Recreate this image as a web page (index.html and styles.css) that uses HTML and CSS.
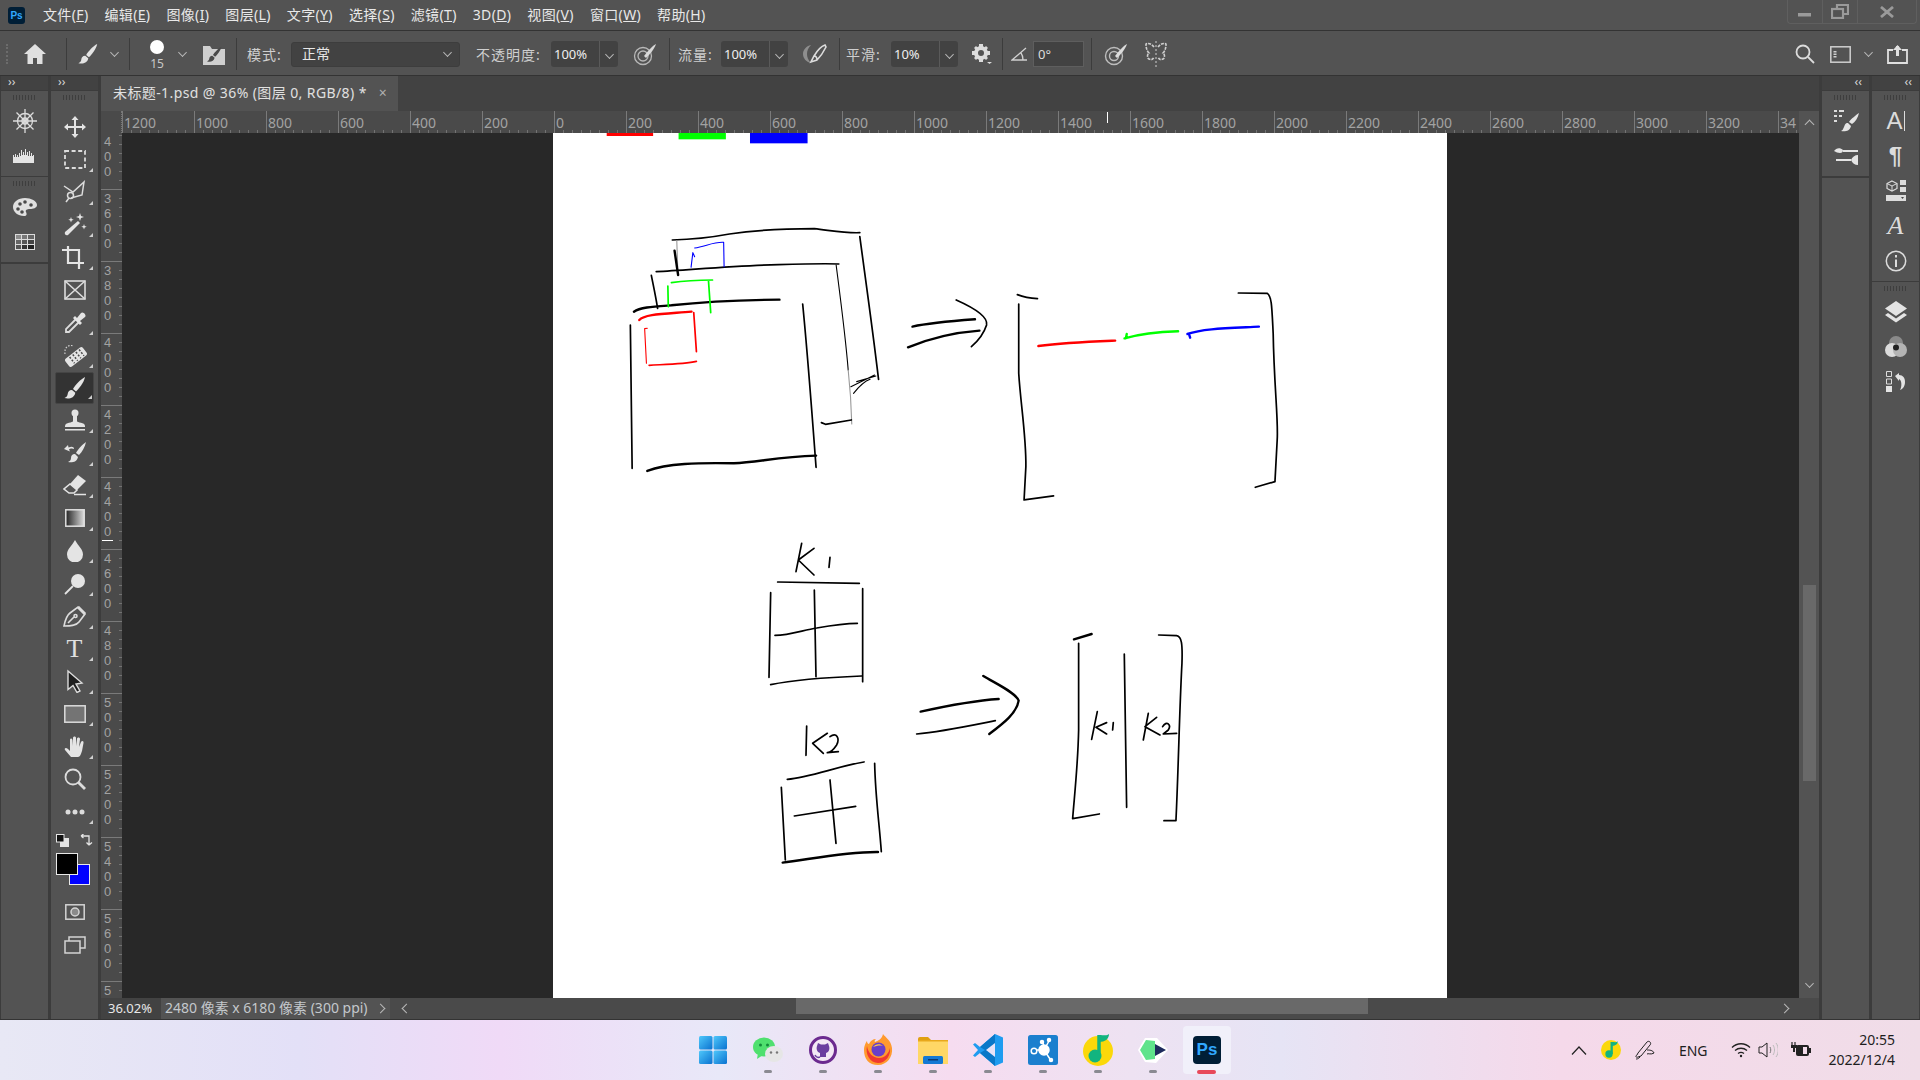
FILE: index.html
```html
<!DOCTYPE html>
<html>
  <head>
    <title>未标题-1.psd</title>
    <link rel="stylesheet" href="styles.css">
  </head>
  <body>
    <svg class="defs" width="0" height="0">
      <symbol id="brush" viewBox="0 0 24 24">
        <path d="M22 1c-4 2-10 8-12 12l3 2.500c3-3 8-9 9-14.500z"/>
        <path d="M9 14c-3 0-4 2-4.300 4-.2 2-1.200 3-3.200 4 4.500 1.300 10 0 10.800-5.300z"/>
      </symbol>
      <linearGradient id="gradfill"><stop offset="0" stop-color="#222"/><stop offset="1" stop-color="#ddd"/></linearGradient>
      <linearGradient id="winblue" x1="0" y1="0" x2="1" y2="1"><stop offset="0" stop-color="#4fc8fb"/><stop offset="1" stop-color="#0a72d0"/></linearGradient>
    </svg>

    <header class="menubar">
      <div class="ps-logo">Ps</div>
      <nav class="menu">
        <span>文件(<u>F</u>)</span>
        <span>编辑(<u>E</u>)</span>
        <span>图像(<u>I</u>)</span>
        <span>图层(<u>L</u>)</span>
        <span>文字(<u>Y</u>)</span>
        <span>选择(<u>S</u>)</span>
        <span>滤镜(<u>T</u>)</span>
        <span>3D(<u>D</u>)</span>
        <span>视图(<u>V</u>)</span>
        <span>窗口(<u>W</u>)</span>
        <span>帮助(<u>H</u>)</span>
      </nav>
      <div class="win-controls">
        <div class="win-btn win-min"><svg width="14" height="14" viewBox="0 0 14 14"><rect x="0" y="8" width="13" height="3.500" fill="#9a9a9a"/></svg></div>
        <div class="win-btn win-max"><svg width="18" height="15" viewBox="0 0 18 15" fill="none" stroke="#9a9a9a" stroke-width="2.200"><rect x="1" y="5" width="11" height="9"/><path d="M6 4V1h11v9h-4"/></svg></div>
        <div class="win-btn win-close"><svg width="14" height="12" viewBox="0 0 14 12" stroke="#9a9a9a" stroke-width="2.800"><path d="M1 1l12 10M13 1L1 11"/></svg></div>
      </div>
    </header>

    <section class="optbar">
      <div class="opt-grip"></div>
      <div class="opt-home"><svg width="22" height="20" viewBox="0 0 22 20" fill="#e0e0e0"><path d="M11 0L0 10h3.500v10H9v-6h4v6h5.500V10H22z"/></svg></div>
      <div class="opt-sep"></div>
      <svg class="opt-brush ico" width="22" height="22"><use href="#brush"/></svg>
      <div class="chev opt-chev-1"></div>
      <div class="opt-sep opt-sep-2"></div>
      <div class="brush-tip"><div class="tip-dot"></div><div class="tip-size">15</div></div>
      <div class="chev opt-chev-2"></div>
      <div class="brush-panel"><svg width="22" height="22" viewBox="0 0 22 22"><path d="M0 3h7l2 3h13v16H0z" fill="#cfcfcf"/><path transform="translate(3 3) scale(.7)" d="M22 1c-4 2-10 8-12 12l3 2.500c3-3 8-9 9-14.500zM9 14c-3 0-4 2-4.300 4-.2 2-1.200 3-3.200 4 4.500 1.300 10 0 10.800-5.300z" fill="#4a4a4a"/></svg></div>
      <div class="opt-sep opt-sep-3"></div>
      <label class="opt-label lbl-mode">模式:</label>
      <div class="select">正常<div class="chev"></div></div>
      <label class="opt-label lbl-opacity">不透明度:</label>
      <div class="numbox"><span>100%</span><div class="numbox-arrow"><div class="chev"></div></div></div>
      <svg class="opt-icon icon-airbrush" width="24" height="24" viewBox="0 0 24 24" fill="none" stroke="#b8b8b8" stroke-width="1.300"><circle cx="10" cy="14" r="8.500"/><circle cx="10" cy="14" r="5"/><path d="M23 2c-3 1-9 8-12 12l2 2c3-3 8-8 10-14z" fill="#d8d8d8" stroke="none"/></svg>
      <div class="opt-sep opt-sep-4"></div>
      <label class="opt-label lbl-flow">流量:</label>
      <div class="numbox"><span>100%</span><div class="numbox-arrow"><div class="chev"></div></div></div>
      <svg class="opt-icon icon-flow" width="24" height="20" viewBox="0 0 24 20"><path d="M8 1C3 2 0 6 0 10s3 8 8 9C5 16 4 13 4 10s1-6 4-9z" fill="#8e8e8e"/><path d="M22 1c-3 1-8 6-11 11l-3 6 6-2c3-3 7-9 9-13zM11 12c2 0 3 1 3 4" fill="none" stroke="#dcdcdc" stroke-width="1.600"/></svg>
      <div class="opt-sep opt-sep-5"></div>
      <label class="opt-label lbl-smooth">平滑:</label>
      <div class="numbox"><span>10%</span><div class="numbox-arrow"><div class="chev"></div></div></div>
      <svg class="opt-icon icon-gear" width="20" height="20" viewBox="0 0 20 20"><circle cx="9" cy="9" r="5" fill="none" stroke="#dcdcdc" stroke-width="4"/><path d="M7 0h4v3H7zM7 15h4v3H7zM0 7h3v4H0zM15 7h3v4h-3zM2 4l2-2 2 2-2 2zM12 4l2-2 2 2-2 2zM2 14l2-2 2 2-2 2zM12 14l2-2 2 2-2 2z" fill="#dcdcdc"/><path d="M15 18h5l-2.500 2z" fill="#dcdcdc"/></svg>
      <div class="opt-sep opt-sep-6"></div>
      <svg class="opt-icon icon-angle" width="16" height="14" viewBox="0 0 16 14" fill="none" stroke="#d0d0d0" stroke-width="1.300"><path d="M15 1L1 13h15M10 6c1.500 2 2 4 2 7"/></svg>
      <div class="anglebox">0°</div>
      <div class="opt-sep opt-sep-7"></div>
      <svg class="opt-icon icon-target" width="24" height="24" viewBox="0 0 24 24" fill="none" stroke="#bdbdbd" stroke-width="1.400"><circle cx="10" cy="14" r="8.500"/><circle cx="10" cy="14" r="4.500"/><path d="M23 2c-3 1-9 8-12 12l2 2c3-3 8-8 10-14z" fill="#dcdcdc" stroke="none"/></svg>
      <svg class="opt-icon icon-butterfly" width="22" height="26" viewBox="0 0 22 26" fill="none" stroke="#cfcfcf" stroke-width="1.600"><path d="M11 0v26" stroke-dasharray="2 2" stroke-width="1"/><path d="M9 6C6 2 2 2 1 3c0 4 1 7 3 9-2 1-2 5 0 6s4 1 5-2M13 6c3-4 7-4 8-3 0 4-1 7-3 9 2 1 2 5 0 6s-4 1-5-2" stroke-dasharray="3 1"/></svg>
      <div class="opt-right">
        <svg width="20" height="20" viewBox="0 0 20 20" fill="none" stroke="#dcdcdc" stroke-width="1.800"><circle cx="8" cy="8" r="6.500"/><path d="M13 13l6 6"/></svg>
        <svg class="icon-workspace" width="21" height="17" viewBox="0 0 21 17" fill="none" stroke="#cfcfcf" stroke-width="1.500"><rect x=".8" y=".8" width="19.400" height="15.400"/><path d="M5 5v7" stroke-width="3" stroke-dasharray="1.500 1"/></svg>
        <div class="chev icon-wschev"></div>
        <svg class="icon-share" width="21" height="20" viewBox="0 0 21 20" fill="none" stroke="#e0e0e0" stroke-width="1.800"><path d="M6 6H1v13h19V6h-5"/><path d="M10.500 12V2" stroke-width="3"/><path d="M6 6l4.500-5L15 6z" fill="#e0e0e0" stroke="none"/></svg>
      </div>
    </section>

    <main class="workspace">
      <aside class="dock dock-left">
        <div class="dock-col">
          <div class="dock-head">››</div>
          <div class="panel panel-2">
            <div class="grip"></div>
            <svg width="24" height="24" viewBox="0 0 24 24" fill="none" stroke="#dcdcdc" stroke-width="1.300"><circle cx="12" cy="12" r="7.500"/><circle cx="12" cy="12" r="3"/><path d="M12 0v24M0 12h24M3.500 3.500l17 17M20.500 3.500l-17 17"/></svg>
            <svg width="24" height="14" viewBox="0 0 24 14" fill="#e4e4e4"><path d="M0 14V6h1v2h1V5h1v3h1V6h1v2h1V4h1v3h1V1h1v5h1V3h1v3h1V0h1v6h1V3h1v4h1V2h1v5h1V4h1v3h1V6h1v8z"/></svg>
          </div>
          <div class="panel panel-2">
            <div class="grip"></div>
            <svg width="24" height="18" viewBox="0 0 24 18"><path d="M12 0C5 0 0 4 0 9s5 9 11 9c3 0 3-2 2-4s1-3 4-3 7-1 7-4c0-4-6-7-12-7z" fill="#e0e0e0"/><circle cx="7" cy="6" r="1.800" fill="#4a4a4a"/><circle cx="12" cy="4" r="1.800" fill="#4a4a4a"/><circle cx="5" cy="11" r="1.800" fill="#4a4a4a"/><circle cx="9" cy="14" r="1.800" fill="#4a4a4a"/><circle cx="18" cy="7" r="1.800" fill="#4a4a4a"/></svg>
            <svg width="20" height="16" viewBox="0 0 20 16"><rect width="20" height="16" fill="#dcdcdc"/><rect x="1" y="1" width="5" height="4" fill="#8c8c8c"/><rect x="7" y="1" width="5" height="4" fill="#777"/><rect x="13" y="1" width="6" height="4" fill="#666"/><rect x="1" y="6" width="5" height="4" fill="#666"/><rect x="7" y="6" width="5" height="4" fill="#555"/><rect x="13" y="6" width="6" height="4" fill="#444"/><rect x="1" y="11" width="5" height="4" fill="#555"/><rect x="7" y="11" width="5" height="4" fill="#333"/><rect x="13" y="11" width="6" height="4" fill="#222"/></svg>
          </div>
          <div class="panel-rest"></div>
        </div>
        <div class="dock-col">
          <div class="dock-head">››</div>
          <div class="toolbar">
            <div class="grip"></div>
            <div class="tool"><svg class="ico" width="24" height="24" viewBox="0 0 24 24"><path d="M12 1l3.500 4H13v6h6V8.500l4 3.500-4 3.500V13h-6v6h2.500L12 23l-3.500-4H11v-6H5v2.500L1 12l4-3.500V11h6V5H8.500z"/></svg></div>
            <div class="tool more"><svg width="22" height="20" viewBox="0 0 22 20" fill="none" stroke="#dcdcdc" stroke-width="1.800" stroke-dasharray="4 2.600"><rect x="1" y="1" width="20" height="17"/></svg></div>
            <div class="tool more"><svg width="24" height="24" viewBox="0 0 24 24" fill="none" stroke="#dcdcdc" stroke-width="1.500"><path d="M1 6l9 6 11-10-2 13-11 3"/><circle cx="7.500" cy="15.500" r="3"/><path d="M6 18l-3 4"/></svg></div>
            <div class="tool more"><svg width="24" height="24" viewBox="0 0 24 24" fill="#e4e4e4"><path d="M15 8l2 2L5 22c-2 1-4-1-3-3z"/><path d="M17 0l1 3 3 1-3 1-1 3-1-3-3-1 3-1zM8 4l.7 2 2 .7-2 .7L8 9.500l-.7-2-2-.7 2-.7zM21 11l.7 2 2 .7-2 .7-.7 2-.7-2-2-.7 2-.7z"/></svg></div>
            <div class="tool more"><svg width="26" height="24" viewBox="0 0 26 24" fill="none" stroke="#e4e4e4" stroke-width="2.200"><path d="M6 0v17h16M0 4h17v19"/></svg></div>
            <div class="tool"><svg width="24" height="22" viewBox="0 0 24 22" fill="none" stroke="#dcdcdc" stroke-width="1.600"><rect x="2" y="2" width="20" height="18"/><path d="M2 2l20 18M22 2L2 20"/></svg></div>
            <div class="tool more"><svg width="24" height="24" viewBox="0 0 24 24"><path d="M13 8L3 18v3h3L16 11" fill="none" stroke="#dcdcdc" stroke-width="1.800"/><path d="M12 5l2 2 4-5c2-2 6 2 4 4l-5 4 2 2-2 2-7-7z" fill="#e4e4e4"/></svg></div>
            <div class="tool more"><svg width="24" height="24" viewBox="0 0 24 24"><g transform="rotate(-38 13 14)"><rect x="2" y="9" width="22" height="10" rx="2" fill="#e4e4e4"/><path d="M8 10v8M12 10v8M16 10v8M20 10v8" stroke="#4a4a4a" stroke-width="1.500" stroke-dasharray="2 1.500"/></g><path d="M2 11C1 5 5 1 11 3" fill="none" stroke="#cfcfcf" stroke-width="1.200" stroke-dasharray="1.500 1.500"/></svg></div>
            <div class="tool more active"><svg class="ico" width="24" height="24"><use href="#brush"/></svg></div>
            <div class="tool more"><svg width="22" height="24" viewBox="0 0 22 24" fill="#e4e4e4"><circle cx="11" cy="4" r="3.500"/><path d="M9 7h4v5c0 2 8 1 8 5v1H1v-1c0-4 8-3 8-5z"/><path d="M1 20h20v1.500H1z"/></svg></div>
            <div class="tool more"><svg class="ico" width="24" height="24" viewBox="0 0 24 24"><path d="M23 1c-3 2-8 7-10 11l3 2c3-3 6-8 7-13zM12 13c-3 0-4 2-4 4s-1 3-3 4c4 1 9 0 10-5zM1 8l4-4 .5 2.500C9 5 11 6 11 8 9 7 7 7.500 6 8.500l1 2z"/></svg></div>
            <div class="tool more"><svg width="24" height="24" viewBox="0 0 24 24"><path d="M15 1l8 6-9 9-7-6z" fill="#e4e4e4"/><path d="M7 10l7 6-3 3H6l-5-4z" fill="none" stroke="#e4e4e4" stroke-width="1.500"/><path d="M11 20.500h12" stroke="#e4e4e4" stroke-width="1.500"/></svg></div>
            <div class="tool more"><svg width="20" height="18" viewBox="0 0 20 18"><rect x=".8" y=".8" width="18.400" height="16.400" fill="url(#gradfill)" stroke="#e0e0e0" stroke-width="1.500"/></svg></div>
            <div class="tool more"><svg class="ico" width="16" height="22" viewBox="0 0 16 22"><path d="M8 0c3 6 8 9 8 14.500a8 8 0 0 1-16 0C0 9 5 6 8 0z"/></svg></div>
            <div class="tool more"><svg width="24" height="24" viewBox="0 0 24 24"><circle cx="15" cy="9" r="7" fill="#e4e4e4"/><path d="M10 14l-8 8" stroke="#e4e4e4" stroke-width="1.800"/></svg></div>
            <div class="tool more"><svg width="24" height="24" viewBox="0 0 24 24" fill="none" stroke="#dcdcdc" stroke-width="1.600"><path d="M1 22c1-5 2-10 6-13L15 3l7 7-6 8c-3 4-9 4-15 4zM5 19l6-6"/><circle cx="12.500" cy="12" r="1.500"/><path d="M15 3l7 7" stroke-width="3"/></svg></div>
            <div class="tool more"><span class="type-glyph">T</span></div>
            <div class="tool more"><svg width="20" height="24" viewBox="0 0 20 24"><path d="M3 2l14 12-6 1 4 7-3 1.500-4-7-5 4z" fill="#1e1e1e" stroke="#dcdcdc" stroke-width="1.400"/></svg></div>
            <div class="tool more"><svg width="22" height="18" viewBox="0 0 22 18"><rect x=".8" y=".8" width="20.400" height="16.400" fill="#747474" stroke="#dcdcdc" stroke-width="1.500"/></svg></div>
            <div class="tool more"><svg class="ico" width="22" height="22" viewBox="0 0 22 22"><path d="M7 21c-2-2-4-5-6-7-1-2 1-3 3-1l2 2V4c0-2 2-2 2.500 0l.5 6V2c0-2 3-2 3 0v8l1-7c0-2 3-2 3 0l-1 8 2-5c1-2 3-1 2.500 1L18 15c-1 3-2 6-4 6z"/></svg></div>
            <div class="tool"><svg width="22" height="22" viewBox="0 0 22 22" fill="none" stroke="#dcdcdc"><circle cx="9" cy="9" r="7.500" stroke-width="1.800"/><path d="M14.500 14.500l6.500 6.500" stroke-width="2.800"/></svg></div>
            <div class="tool more"><svg width="20" height="6" viewBox="0 0 20 6" fill="#dcdcdc"><circle cx="3" cy="3" r="2.500"/><circle cx="10" cy="3" r="2.500"/><circle cx="17" cy="3" r="2.500"/></svg></div>
            <div class="tool-swatch-top">
              <svg width="13" height="13" viewBox="0 0 13 13"><rect x="4" y="4" width="9" height="9" fill="#e4e4e4"/><rect x=".5" y=".5" width="7.500" height="7.500" fill="#111" stroke="#e4e4e4"/></svg>
              <svg width="13" height="13" viewBox="0 0 13 13" fill="none" stroke="#e4e4e4" stroke-width="1.300"><path d="M1 2h8v9M1 2l2.500-2M1 2l2.500 2M9 11L6.500 8.500M9 11l3-2.500"/></svg>
            </div>
            <div class="swatches"><div class="swatch-bg"></div><div class="swatch-fg"></div></div>
            <div class="tool tool-qm"><svg width="20" height="16" viewBox="0 0 20 16" fill="none" stroke="#d4d4d4" stroke-width="1.500"><rect x=".8" y=".8" width="18.400" height="14.400"/><circle cx="10" cy="8" r="4" fill="#8a8a8a"/></svg></div>
            <div class="tool"><svg width="22" height="18" viewBox="0 0 22 18" fill="none" stroke="#d4d4d4" stroke-width="1.500"><rect x="1" y="5" width="15" height="12"/><path d="M5 5V1h16v11h-5"/></svg></div>
          </div>
        </div>
      </aside>

      <section class="doc">
        <div class="tabbar">
          <div class="tab">未标题-1.psd @ 36% (图层 0, RGB/8) * <span class="tab-close">×</span></div>
        </div>
        <div class="ruler-row">
          <div class="ruler-corner"></div>
          <div class="hruler">
            <span>1200</span><span>1000</span><span>800</span><span>600</span><span>400</span><span>200</span><span>0</span><span>200</span><span>400</span><span>600</span><span>800</span><span>1000</span><span>1200</span><span>1400</span><span>1600</span><span>1800</span><span>2000</span><span>2200</span><span>2400</span><span>2600</span><span>2800</span><span>3000</span><span>3200</span><span>34</span>
            <i class="ruler-mark-h"></i>
          </div>
          <div class="scroll-cap"><div class="chev chev-up"></div></div>
        </div>
        <div class="doc-body">
          <div class="vruler">
            <div>4<br>0<br>0</div><div>3<br>6<br>0<br>0</div><div>3<br>8<br>0<br>0</div><div>4<br>0<br>0<br>0</div><div>4<br>2<br>0<br>0</div><div>4<br>4<br>0<br>0</div><div>4<br>6<br>0<br>0</div><div>4<br>8<br>0<br>0</div><div>5<br>0<br>0<br>0</div><div>5<br>2<br>0<br>0</div><div>5<br>4<br>0<br>0</div><div>5<br>6<br>0<br>0</div><div>5</div>
            <i class="ruler-mark-v"></i>
          </div>
          <div class="canvas">
            <div class="paper">
              <svg class="sketch" viewBox="553 133 894 865" width="894" height="865">
                <g transform="translate(600 120) scale(.4464 .3333)">
                  <rect x="15" y="39" width="104" height="9" fill="#ff0000"/>
                  <rect x="176" y="39" width="106" height="19" fill="#00ff00"/>
                  <rect x="336" y="39" width="129" height="31" fill="#0000ff"/>
                  <g class="ink">
                    <path d="M162 360C220 358 250 352 290 342C350 330 430 326 480 326C520 332 550 340 582 338"/>
                    <path d="M582 350C595 480 610 620 624 778"/>
                    <path class="thin gray" d="M172 362L174 440"/>
                    <path class="thick" d="M167 392L175 465"/>
                    <path d="M126 455C200 450 300 437 400 434C450 432 500 430 535 432"/>
                    <path class="thin" d="M529 435C540 550 550 650 556 750"/>
                    <path class="thin gray" d="M556 750C560 800 563 860 564 912"/>
                    <path d="M115 466C120 500 125 530 129 565"/>
                    <path class="thin" d="M562 800L615 765M575 785L618 768M568 820C580 800 590 785 605 778"/>
                    <path d="M496 908L505 913L563 900"/>
                    <path class="thick" d="M76 575C90 562 120 560 160 556C230 546 320 540 402 539"/>
                    <path d="M454 552C465 700 475 880 484 1042"/>
                    <path d="M68 615L72 1045"/>
                    <path class="thick" d="M106 1053C150 1030 220 1028 300 1030C350 1028 400 1010 484 1007"/>
                    <path class="thick" d="M700 620C740 608 790 603 840 598"/>
                    <path class="thick" d="M690 682C730 660 790 638 850 632"/>
                    <path d="M798 540C840 565 870 590 866 615C860 640 845 665 832 680"/>
                    <path d="M935 524C950 532 965 535 980 536"/>
                    <path d="M938 552L938 760C942 850 955 950 954 1040L950 1140L1016 1128"/>
                    <path d="M1430 519L1495 520C1505 530 1505 560 1508 640C1510 800 1520 900 1517 960L1512 1085L1468 1102"/>
                  </g>
                  <g class="ink red">
                    <path class="thick" d="M88 600C100 582 140 582 205 575"/>
                    <path d="M210 578L216 695M110 736C150 733 190 732 216 724"/>
                    <path class="thin" d="M106 625L100 626L104 730"/>
                    <path class="thick" d="M982 678C1040 668 1100 665 1154 662"/>
                  </g>
                  <g class="ink green">
                    <path d="M160 488C190 482 220 480 252 480M152 498L153 560M243 482L248 578"/>
                    <path class="thick" d="M1175 655C1210 642 1250 636 1295 634M1180 642L1178 655"/>
                  </g>
                  <g class="ink blue">
                    <path class="thin" d="M204 442L208 398L212 410M212 384C235 380 255 365 277 367L278 440"/>
                    <path class="thick" d="M1316 642C1350 626 1400 625 1476 620M1320 645L1322 653"/>
                  </g>
                </g>
                <g class="ink" transform="translate(740 530) scale(.3333)">
                  <path d="M185 40L168 125M222 55L175 90L222 135M270 82L267 112"/>
                  <path d="M113 156L358 160M92 188L87 442M368 176L368 455M223 180L228 440"/>
                  <path d="M105 316C150 316 190 300 230 294C280 285 320 280 352 280"/>
                  <path d="M92 464C150 452 260 442 365 438"/>
                  <path d="M200 588L198 676M262 610L218 640L250 670"/>
                  <path d="M270 620C290 605 300 625 290 645C280 660 270 668 262 668L295 665"/>
                  <path d="M142 748C210 742 290 710 372 696M124 772L136 990"/>
                  <path d="M404 700C406 800 418 880 424 965M163 858L347 829M270 750L288 940"/>
                  <path class="thick" d="M128 998C200 990 310 965 414 966"/>
                  <path class="thick" d="M542 545C610 530 700 512 776 507"/>
                  <path d="M530 612C600 606 700 585 766 572"/>
                  <path class="thick" d="M730 438C770 462 830 490 836 512C830 550 790 580 748 612"/>
                  <path class="thick" d="M1002 328L1055 312"/>
                  <path d="M1016 340L1016 600C1014 700 1005 780 998 866L1078 852"/>
                  <path d="M1256 315L1310 317C1325 320 1328 340 1326 400C1318 550 1316 700 1308 872L1272 872"/>
                  <path d="M1153 372L1160 832"/>
                  <path d="M1072 545L1055 628M1100 578L1068 592L1100 612M1120 578L1118 600"/>
                  <path d="M1225 550L1210 630M1250 562L1215 590L1260 615"/>
                  <path d="M1268 590C1280 570 1295 585 1285 600L1270 612L1310 610"/>
                </g>
              </svg>
            </div>
          </div>
          <div class="vscroll">
            <div class="vscroll-thumb"></div>
            <div class="chev vscroll-down"></div>
          </div>
        </div>
        <footer class="statusbar">
          <div class="zoom-val">36.02%</div>
          <div class="doc-info">2480 像素 x 6180 像素 (300 ppi)</div>
          <div class="info-arrow"><div class="chev chev-right"></div></div>
          <div class="hscroll">
            <div class="chev chev-left"></div>
            <div class="hscroll-thumb"></div>
            <div class="chev chev-right"></div>
          </div>
        </footer>
      </section>

      <aside class="dock dock-right">
        <div class="dock-col">
          <div class="dock-head dock-head-r">‹‹</div>
          <div class="panel panel-2">
            <div class="grip"></div>
            <svg width="28" height="24" viewBox="0 0 28 24"><path d="M2 1h3v2H2zM2 6h3v2H2zM2 11h3v2H2zM7 1h5v2H7zM7 6h3v2H7z" fill="#dcdcdc"/><path d="M27 4c-3 2-8 6-10 9l3 2c3-2 6-6 7-11zM16 14c-3 0-3 2-4 4s-1 3-3 4c4 1 9 0 10-5z" fill="#e4e4e4"/></svg>
            <svg width="26" height="20" viewBox="0 0 26 20" fill="#e4e4e4"><path d="M10 4h15v2H10zM1 5c2-3 6-4 9-1 0 2-1 3-3 3-2 0-4-1-6-2zM3 13h15v2H3zM18 14c1-3 4-5 7-5v10c-3 0-6-2-7-5z"/></svg>
          </div>
          <div class="panel-rest"></div>
        </div>
        <div class="dock-col">
          <div class="dock-head dock-head-r">‹‹</div>
          <div class="panel panel-b1">
            <div class="grip"></div>
            <div class="panel-glyph glyph-a">A<i></i></div>
            <div class="panel-glyph glyph-p">¶</div>
            <svg width="20" height="22" viewBox="0 0 20 22"><path d="M6 1l5 2.500v5L6 11 1 8.500v-5z" fill="none" stroke="#dcdcdc" stroke-width="1.200"/><path d="M1 3.500l5 2.500 5-2.500M6 6v5" fill="none" stroke="#dcdcdc"/><path d="M14 0h6v5h-6zM14 7h6v5h-6zM0 15h20v6H0z" fill="#dcdcdc"/><path d="M15 17h3l-1.500 2z" fill="#444"/></svg>
            <div class="panel-glyph glyph-script">A</div>
            <svg width="22" height="22" viewBox="0 0 22 22" fill="none" stroke="#dcdcdc" stroke-width="1.500"><circle cx="11" cy="11" r="9.700"/><path d="M11 9.500V17" stroke-width="2"/><path d="M11 5v2.500" stroke-width="2"/></svg>
          </div>
          <div class="panel panel-b2">
            <div class="grip"></div>
            <svg width="22" height="22" viewBox="0 0 22 22" fill="#e4e4e4"><path d="M11 0l11 7.500L11 15 0 7.500z"/><path d="M3 12l8 5.500 8-5.500 3 2-11 7.500L0 14z"/></svg>
            <svg width="22" height="21" viewBox="0 0 22 21"><circle cx="11" cy="7" r="7" fill="#8a8a8a"/><circle cx="7" cy="14" r="7" fill="#dcdcdc"/><circle cx="15" cy="14" r="7" fill="#b4b4b4"/><circle cx="11" cy="11.500" r="3" fill="#222"/></svg>
            <svg width="20" height="21" viewBox="0 0 20 21"><path d="M.5.500h5v5h-5zM.5 8h5v5h-5z" fill="none" stroke="#dcdcdc"/><path d="M0 15h6v6H0z" fill="#e4e4e4"/><path d="M9 5l4-3v2c4 0 6 3 6 7 0 4-2 7-5 8 2-3 2-10-1-11v2z" fill="#e4e4e4"/></svg>
          </div>
        </div>
      </aside>
    </main>

    <footer class="taskbar">
      <div class="task-icons">
        <div class="task"><svg width="28" height="28" viewBox="0 0 28 28" fill="url(#winblue)"><rect width="13.500" height="13.500" rx="1.500"/><rect x="14.500" width="13.500" height="13.500" rx="1.500"/><rect y="14.500" width="13.500" height="13.500" rx="1.500"/><rect x="14.500" y="14.500" width="13.500" height="13.500" rx="1.500"/></svg></div>
        <div class="task on"><svg width="30" height="28" viewBox="0 0 30 28"><ellipse cx="11" cy="11" rx="11" ry="9.500" fill="#4fe06e"/><path d="M5 17l-1 6 6-4z" fill="#4fe06e"/><circle cx="7.500" cy="9" r="1.500" fill="#138a3a"/><circle cx="14.500" cy="9" r="1.500" fill="#138a3a"/><ellipse cx="21" cy="18" rx="9" ry="8" fill="#e6e6e6"/><circle cx="18" cy="16.500" r="1.200" fill="#777"/><circle cx="24" cy="16.500" r="1.200" fill="#777"/></svg></div>
        <div class="task on"><svg width="28" height="28" viewBox="0 0 28 28"><circle cx="14" cy="14" r="12.500" fill="#f3e8f5" stroke="#6b2a8f" stroke-width="3"/><path d="M8 10l1-3 3 1.500h4L19 7l1 3c1 3 0 6-3 7v4h-6v-4c-3-1-4-4-3-7z" fill="#6b3fa0"/><path d="M11 21c-2 1-4 0-5-2" stroke="#6b3fa0" stroke-width="1.500" fill="none"/></svg></div>
        <div class="task on"><svg width="30" height="32" viewBox="0 0 30 32"><path d="M20 0c2 3 8 6 9 14 1 9-5 17-14 17S1 25 1 16c0-4 2-8 3-9 0 2 1 3 2 3 1-3 4-5 7-5-1 1-2 2-1 3 3-1 7-3 8-8z" fill="#ff9a2e"/><path d="M4 12c-2 8 3 17 11 17s13-8 12-15c-1 5-5 10-11 10S5 19 4 12z" fill="#f0392f"/><circle cx="15.500" cy="15.500" r="7" fill="#6a3fc8"/><path d="M10 13c2-3 7-4 10-1-3-1-7 0-10 1z" fill="#ffc94a"/></svg></div>
        <div class="task on"><svg width="30" height="28" viewBox="0 0 30 28"><path d="M0 3a2 2 0 0 1 2-2h8l3 3h-13z" fill="#e0a010"/><path d="M0 4h30v24H0z" fill="#ffd766"/><path d="M0 4h30v1.500H0z" fill="#e8a81c"/><rect x="5" y="20" width="20" height="8" rx="1.500" fill="#1479d4"/><rect x="10" y="23" width="10" height="1.500" fill="#0b3a72"/></svg></div>
        <div class="task on"><svg width="30" height="32" viewBox="0 0 30 32"><path d="M22 0l8 3.500v25L22 32 7 19l-5 4-2-1.500L5 16 0 10.500 2 9l5 4z" fill="#1f9cf0"/><path d="M22 0v32L7 19l5-3-5-3z" fill="#0a78c8"/><path d="M22 9v14l-9-7z" fill="#e8e4f8"/></svg></div>
        <div class="task on"><svg width="30" height="30" viewBox="0 0 30 30"><rect width="30" height="30" rx="2.500" fill="#1b7fce"/><g stroke="#fff" stroke-width="1.500" fill="#fff"><path d="M16 15L21 6M16 15l-7 0M16 15l6 9M16 15l-1-8" fill="none"/><circle cx="16" cy="15" r="5"/><circle cx="21" cy="5" r="1.500"/><circle cx="14" cy="7" r="1.500"/><circle cx="23" cy="25" r="1.500"/></g><circle cx="6" cy="16" r="2.800" fill="none" stroke="#fff" stroke-width="1.500"/></svg></div>
        <div class="task on"><svg width="30" height="32" viewBox="0 0 30 32"><circle cx="15" cy="17" r="15" fill="#fbd80a"/><path d="M16 1v21" stroke="#12b47f" stroke-width="3.500"/><path d="M16 1c5 0 8 1 10-1 0 5-4 8-10 8z" fill="#12b47f"/><circle cx="12" cy="22" r="6.500" fill="#12b47f"/></svg></div>
        <div class="task on"><svg width="30" height="28" viewBox="0 0 30 28"><path d="M0 14l7-12 12 0 11 12-12 13-11-1z" fill="#fff"/><path d="M2 14l6-10 9 1v18l-9 1z" fill="#5fe38b"/><path d="M17 8l11 6-11 6z" fill="#1d2a5c"/></svg></div>
        <div class="task task-active"><div class="ps-tile">Ps</div></div>
      </div>
      <div class="tray">
        <svg class="tray-up" width="16" height="9" viewBox="0 0 16 9" fill="none" stroke="#222" stroke-width="1.200"><path d="M1 8.500L8 1l7 7.500"/></svg>
        <svg class="tray-qq" width="20" height="20" viewBox="0 0 30 30"><circle cx="15" cy="15" r="15" fill="#fbd80a"/><path d="M16 3v18" stroke="#12b47f" stroke-width="3.500"/><path d="M16 3c4 0 7 1 9-1 0 5-4 7-9 7z" fill="#12b47f"/><circle cx="12" cy="21" r="5.500" fill="#12b47f"/></svg>
        <svg class="tray-pen" width="20" height="20" viewBox="0 0 20 20" fill="none" stroke="#222" stroke-width="1"><path d="M3 13L12 2c2-2 5 1 3 3L6 16l-3 1c-2 1-3-1-1-2z"/><path d="M12 10c2 0 6 0 7 3-3 2-6 0-7 1"/><path d="M1 19c1 0 2 0 4-2"/></svg>
        <span class="tray-lang">ENG</span>
        <svg class="tray-wifi" width="20" height="16" viewBox="0 0 20 16" fill="none" stroke="#222" stroke-width="1.300"><path d="M1 5.500c5-5 13-5 18 0M4 8.500c3.500-3 8.500-3 12 0M7 11.500c2-1.500 4-1.500 6 0"/><circle cx="10" cy="14" r="1.200" fill="#222" stroke="none"/></svg>
        <svg class="tray-vol" width="20" height="16" viewBox="0 0 20 16" fill="none" stroke="#222"><path d="M1 5h3l5-4v14l-5-4H1z"/><path d="M12 5c1 2 1 4 0 6" stroke="#777"/><path d="M15 3c2 3 2 7 0 10M18 1c3 4 3 10 0 14" stroke="#bbb"/></svg>
        <svg class="tray-bat" width="20" height="16" viewBox="0 0 20 16"><path d="M1 0v3M4 0v3" stroke="#222" stroke-width="1.200"/><path d="M0 3h6v3H4v4H2V6H0z" fill="#222"/><rect x="5" y="3" width="13" height="11" rx="2" fill="#222"/><rect x="18" y="6" width="2" height="5" fill="#222"/><rect x="12" y="5" width="4" height="7" fill="#f2dcea"/></svg>
        <div class="clock"><div>20:55</div><div>2022/12/4</div></div>
      </div>
    </footer>
  </body>
</html>
```

FILE: styles.css
```css
* {
  box-sizing: border-box;
}
html, body {
  margin: 0;
  padding: 0;
}
body {
  width: 1920px;
  height: 1080px;
  display: flex;
  flex-direction: column;
  overflow: hidden;
  background-color: #3a3a3a;
  font-family: "Noto Sans", "Noto Sans CJK SC", sans-serif;
  font-size: 14px;
  color: #dcdcdc;
}
.defs {
  position: absolute;
}
.ico {
  fill: #e4e4e4;
}

/* top menu */
.menubar {
  height: 31px;
  display: flex;
  align-items: flex-start;
  background-color: #535353;
  border-bottom: 1px solid #333;
  flex-shrink: 0;
}
.ps-logo {
  width: 17px;
  height: 17px;
  margin: 7px 0 0 8px;
  border-radius: 3px;
  background-color: #001e36;
  color: #31a8ff;
  font: bold 10px/17px "Liberation Sans", sans-serif;
  text-align: center;
}
.menu {
  display: flex;
  gap: 16px;
  margin-left: 18px;
  line-height: 29px;
  letter-spacing: .35px;
  color: #e8e8e8;
  white-space: nowrap;
}
.menu u {
  text-underline-offset: 1px;
}
.win-controls {
  margin-left: auto;
  margin-right: 3px;
  display: flex;
  height: 24px;
  border: 1px solid #5f5f5f;
  border-top: none;
  border-radius: 0 0 4px 4px;
}
.win-btn {
  display: flex;
  align-items: center;
  justify-content: center;
  border-right: 1px solid #5f5f5f;
}
.win-min,
.win-max {
  width: 35px;
}
.win-close {
  width: 58px;
  border-right: none;
}

/* options bar */
.optbar {
  height: 45px;
  padding-top: 2px;
  display: flex;
  align-items: center;
  background-color: #535353;
  border-bottom: 1px solid #333;
  flex-shrink: 0;
}
.opt-grip {
  width: 2px;
  height: 20px;
  margin-left: 6px;
  border-left: 2px dotted #6c6c6c;
}
.opt-home {
  margin-left: 16px;
  width: 42px;
  display: flex;
}
.opt-sep {
  width: 1px;
  height: 32px;
  background-color: #3c3c3c;
  flex-shrink: 0;
}
.opt-brush {
  margin-left: 10px;
}
.chev {
  width: 7px;
  height: 7px;
  border-right: 1px solid #b8b8b8;
  border-bottom: 1px solid #b8b8b8;
  transform: rotate(45deg) scale(.9);
  flex-shrink: 0;
}
.opt-chev-1 {
  margin: -3px 0 0 12px;
}
.opt-sep-2 {
  margin-left: 11px;
}
.brush-tip {
  width: 26px;
  margin-left: 14px;
  display: flex;
  flex-direction: column;
  align-items: center;
}
.tip-dot {
  width: 14px;
  height: 14px;
  margin-top: 3px;
  border-radius: 50%;
  background-color: #fff;
}
.tip-size {
  font-size: 12px;
  line-height: 14px;
  margin-top: 3px;
  color: #c8c8c8;
}
.opt-chev-2 {
  margin: -3px 0 0 9px;
}
.brush-panel {
  margin-left: 17px;
  display: flex;
}
.opt-sep-3 {
  margin-left: 11px;
}
.opt-label {
  color: #cfcfcf;
  letter-spacing: 1px;
  white-space: nowrap;
  flex-shrink: 0;
}
.lbl-mode {
  margin-left: 10px;
  width: 44px;
}
.select {
  width: 169px;
  height: 25px;
  padding-left: 10px;
  display: flex;
  align-items: center;
  justify-content: space-between;
  background-color: #424242;
  border: 1px solid #3d3d3d;
  border-radius: 3px;
  color: #e8e8e8;
  line-height: 22px;
}
.select .chev {
  margin: -3px 8px 0 0;
}
.lbl-opacity {
  margin-left: 16px;
  width: 75px;
}
.numbox {
  width: 67px;
  height: 26px;
  display: flex;
  align-items: center;
  background-color: #424242;
  border-radius: 3px;
  font-size: 13px;
  color: #eee;
  flex-shrink: 0;
}
.numbox span {
  width: 48px;
  padding-left: 3px;
}
.numbox-arrow {
  width: 19px;
  height: 100%;
  display: flex;
  align-items: center;
  justify-content: center;
  border-left: 1px solid #5a5a5a;
}
.opt-icon {
  flex-shrink: 0;
}
.icon-airbrush {
  margin-left: 15px;
}
.opt-sep-4 {
  margin-left: 12px;
}
.lbl-flow {
  margin-left: 8px;
  width: 43px;
}
.icon-flow {
  margin-left: 15px;
}
.opt-sep-5 {
  margin-left: 12px;
}
.lbl-smooth {
  margin-left: 6px;
  width: 45px;
}
.icon-gear {
  margin-left: 14px;
}
.opt-sep-6 {
  margin-left: 10px;
}
.icon-angle {
  margin-left: 8px;
}
.anglebox {
  width: 51px;
  height: 26px;
  margin-left: 6px;
  padding-left: 4px;
  background-color: #424242;
  border: 1px solid #5e5e5e;
  font-size: 13px;
  line-height: 24px;
  flex-shrink: 0;
}
.opt-sep-7 {
  margin-left: 7px;
}
.icon-target {
  margin-left: 12px;
}
.icon-butterfly {
  margin-left: 17px;
}
.opt-right {
  margin-left: auto;
  margin-right: 12px;
  display: flex;
  align-items: center;
}
.icon-workspace {
  margin-left: 15px;
}
.icon-wschev {
  margin: -3px 0 0 14px;
}
.icon-share {
  margin-left: 15px;
}

/* main area */
.workspace {
  flex: 1;
  display: flex;
  min-height: 0;
  border-bottom: 1px solid #333;
}
.dock {
  display: flex;
  gap: 3px;
  flex-shrink: 0;
  background-color: #3c3c3c;
}
.dock-left {
  width: 101px;
  padding-right: 3px;
  padding-left: 1px;
}
.dock-right {
  width: 101px;
  padding-left: 3px;
  padding-right: 1px;
}
.dock-col {
  width: 47px;
  display: flex;
  flex-direction: column;
  gap: 1px;
}
.dock-head {
  height: 14px;
  background-color: #424242;
  color: #d8d8d8;
  font-size: 12px;
  line-height: 12px;
  padding-left: 7px;
}
.dock-head-r {
  padding: 0 7px 0 0;
  text-align: right;
}
.panel {
  display: grid;
  grid-template-rows: 12px;
  grid-auto-rows: 35px;
  justify-items: center;
  align-items: center;
  background-color: #535353;
  flex-shrink: 0;
}
.panel-2 {
  height: 85px;
}
.panel-b1 {
  height: 190px;
}
.panel-b2 {
  flex: 1;
}
.panel-rest {
  flex: 1;
  margin-top: 1px;
  background-color: #535353;
}
.grip {
  width: 24px;
  height: 5px;
  flex-shrink: 0;
  background: repeating-linear-gradient(90deg, #3e3e3e 0 1px, transparent 1px 3px);
}
.panel-glyph {
  color: #dcdcdc;
  text-align: center;
}
.glyph-a {
  font: 24px/24px "Liberation Sans", sans-serif;
  display: flex;
  align-items: center;
}
.glyph-a i {
  width: 1px;
  height: 20px;
  margin-left: 1px;
  background-color: #dcdcdc;
}
.glyph-p {
  font: bold 24px/24px "Liberation Sans", sans-serif;
}
.glyph-script {
  font: italic 26px/24px "Liberation Serif", serif;
}

/* tools */
.toolbar {
  flex: 1;
  background-color: #535353;
  display: flex;
  flex-direction: column;
  align-items: stretch;
}
.toolbar .grip {
  margin: 4px auto 11px;
}
.tool {
  height: 32.6px;
  display: flex;
  align-items: center;
  justify-content: center;
  flex-shrink: 0;
  position: relative;
}
.tool.active {
  margin: 0 4px;
  background-color: #333;
  border: 1px solid #454545;
  border-radius: 2px;
}
.tool.more::after {
  content: "";
  position: absolute;
  right: 5px;
  bottom: 4px;
  border-left: 4px solid transparent;
  border-bottom: 4px solid #cfcfcf;
}
.tool.active.more::after {
  right: 1px;
}
.type-glyph {
  font: 26px/26px "Liberation Serif", serif;
  color: #e0e0e0;
}
.tool-swatch-top {
  height: 16px;
  margin-top: 6px;
  padding: 0 5px;
  display: flex;
  justify-content: space-between;
  gap: 6px;
}
.swatches {
  height: 35px;
  margin-top: 3px;
  position: relative;
  flex-shrink: 0;
}
.swatch-fg {
  position: absolute;
  left: 5px;
  top: 0;
  width: 22px;
  height: 22px;
  background-color: #000;
  border: 1px solid #e8e8e8;
}
.swatch-bg {
  position: absolute;
  left: 18px;
  top: 11px;
  width: 21px;
  height: 21px;
  background-color: #0000ff;
  border: 1px solid #e8e8e8;
}
.tool-qm {
  margin-top: 8px;
}

/* document */
.doc {
  flex: 1;
  min-width: 0;
  display: flex;
  flex-direction: column;
}
.tabbar {
  height: 35px;
  background-color: #424242;
  flex-shrink: 0;
}
.tab {
  width: 297px;
  height: 35px;
  padding-left: 12px;
  background-color: #535353;
  line-height: 34px;
  letter-spacing: .4px;
  color: #e0e0e0;
  white-space: nowrap;
}
.tab-close {
  margin-left: 8px;
  color: #b0b0b0;
}
.ruler-row {
  height: 22px;
  display: flex;
  flex-shrink: 0;
}
.ruler-corner {
  width: 21px;
  background-color: #4a4a4a;
  border-right: 1px dotted #777;
}
.hruler {
  width: 1677px;
  display: flex;
  overflow: hidden;
  position: relative;
  color: #a2a2a2;
  background-color: #4a4a4a;
  background-image:
    repeating-linear-gradient(90deg, #7a7a7a 0 1px, transparent 1px 72px),
    repeating-linear-gradient(90deg, #727272 0 1px, transparent 1px 9px);
  background-size: 100% 100%, 100% 3px;
  background-position: 0 0, 0 100%;
  background-repeat: no-repeat;
  line-height: 24px;
}
.hruler span {
  width: 72px;
  flex-shrink: 0;
  padding-left: 2px;
}
.ruler-mark-h {
  position: absolute;
  left: 985px;
  top: 1px;
  width: 1px;
  height: 11px;
  background-color: #fff;
}
.scroll-cap {
  width: 20px;
  background-color: #535353;
  display: flex;
  justify-content: center;
  align-items: center;
}
.chev-up {
  transform: rotate(225deg);
  margin-top: 5px;
}
.doc-body {
  flex: 1;
  display: flex;
  min-height: 0;
}
.vruler {
  width: 21px;
  flex-shrink: 0;
  overflow: hidden;
  position: relative;
  color: #a2a2a2;
  background-color: #4a4a4a;
  background-image:
    repeating-linear-gradient(180deg, transparent 0 56px, #7a7a7a 56px 57px, transparent 57px 72px),
    repeating-linear-gradient(180deg, #727272 0 1px, transparent 1px 9px);
  background-size: 100% 100%, 3px 100%;
  background-position: 0 0, 100% 2px;
  background-repeat: no-repeat;
  font: 13px/15px "Liberation Sans", sans-serif;
}
.vruler div {
  height: 72px;
  padding: 2px 0 0 3px;
}
.vruler div:first-child {
  height: 56px;
  padding-top: 1px;
}
.ruler-mark-v {
  position: absolute;
  left: 1px;
  top: 407px;
  width: 11px;
  height: 1px;
  background-color: #fff;
}
.canvas {
  width: 1677px;
  padding-left: 431px;
  background-color: #282828;
  flex-shrink: 0;
}
.paper {
  width: 894px;
  height: 100%;
  background-color: #fff;
}
.sketch {
  display: block;
}
.ink {
  fill: none;
  stroke: #000;
  stroke-linecap: round;
  stroke-linejoin: round;
}
.ink path {
  stroke-width: 1.7px;
  vector-effect: non-scaling-stroke;
}
.ink .thick {
  stroke-width: 2.4px;
}
.ink .thin {
  stroke-width: 1.1px;
}
.ink .gray {
  stroke: #999;
}
.red {
  stroke: #ff0000;
}
.green {
  stroke: #00ff00;
}
.blue {
  stroke: #0000ff;
}
.vscroll {
  width: 20px;
  background-color: #535353;
  display: flex;
  flex-direction: column;
  align-items: center;
  padding-top: 452px;
}
.vscroll-thumb {
  width: 13px;
  height: 196px;
  background-color: #696969;
}
.vscroll-down {
  margin-top: 199px;
}

/* status */
.statusbar {
  height: 21px;
  display: flex;
  background-color: #4a4a4a;
  flex-shrink: 0;
  line-height: 20px;
  white-space: nowrap;
}
.zoom-val {
  width: 60px;
  padding-left: 7px;
  background-color: #424242;
  color: #e8e8e8;
  font-size: 13px;
}
.doc-info {
  width: 209px;
  padding-left: 4px;
  background-color: #535353;
  color: #c4c8cc;
  font-size: 14px;
}
.info-arrow {
  width: 20px;
  background-color: #535353;
  display: flex;
  align-items: center;
  justify-content: center;
}
.chev-right {
  transform: rotate(-45deg);
}
.chev-left {
  transform: rotate(135deg);
}
.hscroll {
  flex: 1;
  display: flex;
  align-items: flex-start;
  padding-left: 13px;
}
.hscroll .chev {
  margin-top: 7px;
}
.hscroll-thumb {
  width: 572px;
  height: 16px;
  margin-left: 386px;
  background-color: #696969;
}
.hscroll .chev-right {
  margin-left: 413px;
}

/* windows taskbar */
.taskbar {
  height: 60px;
  flex-shrink: 0;
  display: flex;
  align-items: center;
  color: #1e1e1e;
  background: linear-gradient(90deg, #e8e8f5 0, #e3e0f7 300px, #f0daf7 500px, #e8e8f8 720px, #f6dcf0 950px, #eee2f2 1130px, #e6e4f5 1280px, #f5d9ea 1560px, #f0dde8 1920px);
}
.task-icons {
  width: 550px;
  margin-left: 685px;
  display: flex;
}
.task {
  width: 55px;
  height: 48px;
  display: flex;
  align-items: center;
  justify-content: center;
  position: relative;
}
.task.on::after {
  content: "";
  position: absolute;
  left: 24px;
  bottom: 1px;
  width: 8px;
  height: 3px;
  border-radius: 2px;
  background-color: #8a8a92;
}
.task-active {
  margin-left: 3px;
  width: 48px;
  background-color: #f1f0fa;
  border-radius: 4px;
}
.task-active::after {
  content: "";
  position: absolute;
  left: 14px;
  bottom: 0;
  width: 19px;
  height: 4px;
  border-radius: 2px;
  background-color: #e8485a;
}
.ps-tile {
  width: 28px;
  height: 28px;
  border-radius: 4px;
  background-color: #001e36;
  color: #31a8ff;
  font: bold 17px/28px "Liberation Sans", sans-serif;
  text-align: center;
}
.tray {
  margin-left: auto;
  display: flex;
  align-items: center;
  height: 100%;
  padding-right: 25px;
}
.tray-qq {
  margin-left: 14px;
}
.tray-pen {
  margin-left: 14px;
}
.tray-lang {
  margin-left: 24px;
  font-size: 14px;
}
.tray-wifi {
  margin-left: 23px;
}
.tray-vol {
  margin-left: 7px;
}
.tray-bat {
  margin-left: 13px;
}
.clock {
  margin-left: 18px;
  text-align: right;
  font-size: 14px;
  line-height: 20px;
}
```
